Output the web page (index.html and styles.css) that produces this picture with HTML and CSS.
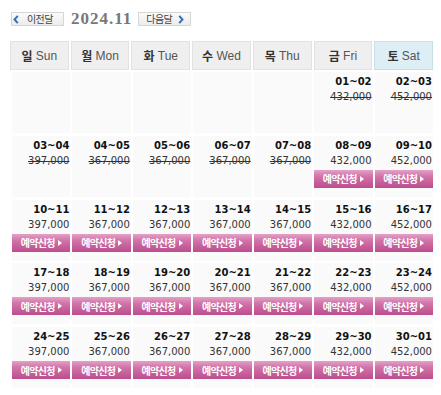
FILE: index.html
```html
<!DOCTYPE html>
<html lang="ko">
<head>
<meta charset="utf-8">
<title>2024.11</title>
<link rel="stylesheet" href="styles.css">
</head>
<body>
<div class="cal">
  <div class="topbar">
    <a class="navbtn prev" href="#"><svg class="chev" width="6" height="9" viewBox="0 0 6 9"><polyline points="4.8,0.8 1.5,4.5 4.8,8.2" fill="none" stroke="#3a70b6" stroke-width="2"/></svg><span class="navtxt">이전달</span></a>
    <span class="title">2024.11</span>
    <a class="navbtn next" href="#"><span class="navtxt">다음달</span><svg class="chev" width="6" height="9" viewBox="0 0 6 9"><polyline points="1.2,0.8 4.5,4.5 1.2,8.2" fill="none" stroke="#3a70b6" stroke-width="2"/></svg></a>
  </div>
  <div class="head">
    <div class="hcell"><b>일</b> Sun</div>
    <div class="hcell"><b>월</b> Mon</div>
    <div class="hcell"><b>화</b> Tue</div>
    <div class="hcell"><b>수</b> Wed</div>
    <div class="hcell"><b>목</b> Thu</div>
    <div class="hcell"><b>금</b> Fri</div>
    <div class="hcell sat"><b>토</b> Sat</div>
  </div>
  <div class="body">
    <div class="cell"></div>
    <div class="cell"></div>
    <div class="cell"></div>
    <div class="cell"></div>
    <div class="cell"></div>
    <div class="cell"><div class="date">01~02</div><div class="price past">432,000</div></div>
    <div class="cell"><div class="date">02~03</div><div class="price past">452,000</div></div>

    <div class="cell"><div class="date">03~04</div><div class="price past">397,000</div></div>
    <div class="cell"><div class="date">04~05</div><div class="price past">367,000</div></div>
    <div class="cell"><div class="date">05~06</div><div class="price past">367,000</div></div>
    <div class="cell"><div class="date">06~07</div><div class="price past">367,000</div></div>
    <div class="cell"><div class="date">07~08</div><div class="price past">367,000</div></div>
    <div class="cell"><div class="date">08~09</div><div class="price">432,000</div><a class="book" href="#">예약신청<i class="tri"></i></a></div>
    <div class="cell"><div class="date">09~10</div><div class="price">452,000</div><a class="book" href="#">예약신청<i class="tri"></i></a></div>

    <div class="cell"><div class="date">10~11</div><div class="price">397,000</div><a class="book" href="#">예약신청<i class="tri"></i></a></div>
    <div class="cell"><div class="date">11~12</div><div class="price">367,000</div><a class="book" href="#">예약신청<i class="tri"></i></a></div>
    <div class="cell"><div class="date">12~13</div><div class="price">367,000</div><a class="book" href="#">예약신청<i class="tri"></i></a></div>
    <div class="cell"><div class="date">13~14</div><div class="price">367,000</div><a class="book" href="#">예약신청<i class="tri"></i></a></div>
    <div class="cell"><div class="date">14~15</div><div class="price">367,000</div><a class="book" href="#">예약신청<i class="tri"></i></a></div>
    <div class="cell"><div class="date">15~16</div><div class="price">432,000</div><a class="book" href="#">예약신청<i class="tri"></i></a></div>
    <div class="cell"><div class="date">16~17</div><div class="price">452,000</div><a class="book" href="#">예약신청<i class="tri"></i></a></div>

    <div class="cell"><div class="date">17~18</div><div class="price">397,000</div><a class="book" href="#">예약신청<i class="tri"></i></a></div>
    <div class="cell"><div class="date">18~19</div><div class="price">367,000</div><a class="book" href="#">예약신청<i class="tri"></i></a></div>
    <div class="cell"><div class="date">19~20</div><div class="price">367,000</div><a class="book" href="#">예약신청<i class="tri"></i></a></div>
    <div class="cell"><div class="date">20~21</div><div class="price">367,000</div><a class="book" href="#">예약신청<i class="tri"></i></a></div>
    <div class="cell"><div class="date">21~22</div><div class="price">367,000</div><a class="book" href="#">예약신청<i class="tri"></i></a></div>
    <div class="cell"><div class="date">22~23</div><div class="price">432,000</div><a class="book" href="#">예약신청<i class="tri"></i></a></div>
    <div class="cell"><div class="date">23~24</div><div class="price">452,000</div><a class="book" href="#">예약신청<i class="tri"></i></a></div>

    <div class="cell"><div class="date">24~25</div><div class="price">397,000</div><a class="book" href="#">예약신청<i class="tri"></i></a></div>
    <div class="cell"><div class="date">25~26</div><div class="price">367,000</div><a class="book" href="#">예약신청<i class="tri"></i></a></div>
    <div class="cell"><div class="date">26~27</div><div class="price">367,000</div><a class="book" href="#">예약신청<i class="tri"></i></a></div>
    <div class="cell"><div class="date">27~28</div><div class="price">367,000</div><a class="book" href="#">예약신청<i class="tri"></i></a></div>
    <div class="cell"><div class="date">28~29</div><div class="price">367,000</div><a class="book" href="#">예약신청<i class="tri"></i></a></div>
    <div class="cell"><div class="date">29~30</div><div class="price">432,000</div><a class="book" href="#">예약신청<i class="tri"></i></a></div>
    <div class="cell"><div class="date">30~01</div><div class="price">452,000</div><a class="book" href="#">예약신청<i class="tri"></i></a></div>
  </div>
</div>
</body>
</html>
```

FILE: styles.css
```css
html, body {
  margin: 0;
  padding: 0;
  background: #fff;
}
.cal {
  padding: 12px 0 0 10px;
  width: 423px;
  font-family: "DejaVu Sans", Verdana, sans-serif;
}
.topbar {
  display: flex;
  align-items: center;
  height: 14px;
  padding-left: 1px;
}
.navbtn {
  display: flex;
  align-items: center;
  box-sizing: border-box;
  height: 14px;
  width: 53px;
  border: 1px solid #d6d6d6;
  background: linear-gradient(#fbfbfb, #ececec);
  text-decoration: none;
  color: #333;
}
.prev { padding-left: 1px; }
.next { padding-left: 7px; }
.chev {
  display: block;
  flex: none;
}
.prev .chev { margin-right: 8px; }
.next .chev { margin-left: 6px; }
.navtxt {
  font-family: "Noto Sans CJK KR", sans-serif;
  font-size: 10px;
  letter-spacing: -0.6px;
  line-height: 12px;
  color: #444;
}
.title {
  font-family: "Liberation Serif", "Times New Roman", serif;
  font-weight: bold;
  font-size: 17px;
  letter-spacing: 1px;
  color: #777;
  margin: 0 6px 0 7px;
  line-height: 14px;
}
.head {
  margin-top: 15px;
  display: grid;
  grid-template-columns: repeat(7, 1fr);
  column-gap: 2px;
}
.hcell {
  box-sizing: border-box;
  height: 29px;
  border: 1px solid #e2e2e2;
  background: #efefef;
  display: flex;
  align-items: center;
  justify-content: center;
  font-family: "Liberation Sans", Arial, sans-serif;
  font-size: 12px;
  color: #555;
  white-space: pre;
}
.hcell b {
  font-family: "Noto Sans CJK KR", sans-serif;
  font-size: 12px;
  font-weight: bold;
  color: #333;
}
.hcell.sat {
  background: #ddeef5;
  border-color: #c8dee8;
}
.body {
  margin: 2px 0 0 2px;
  display: grid;
  grid-template-columns: repeat(7, 1fr);
  grid-auto-rows: 61px;
  column-gap: 2px;
  row-gap: 2.75px;
}
.cell {
  background: #fafafa;
  padding-top: 3px;
  display: flex;
  flex-direction: column;
  align-items: stretch;
}
.date {
  font-weight: bold;
  font-size: 10px;
  line-height: 14px;
  text-align: right;
  color: #111;
  padding-right: 1px;
}
.price {
  font-size: 10px;
  line-height: 16px;
  text-align: right;
  color: #333;
  padding-right: 1px;
}
.price.past {
  text-decoration: line-through;
}
.book {
  margin-top: 1px;
  height: 18px;
  display: flex;
  align-items: center;
  justify-content: center;
  background: linear-gradient(#e3a1c7 0%, #d274aa 35%, #c65e9a 70%, #bb4e8d 100%);
  color: #fff;
  text-decoration: none;
  font-family: "Noto Sans CJK KR", sans-serif;
  font-size: 10px;
  font-weight: bold;
  letter-spacing: -0.7px;
}
.tri {
  display: inline-block;
  width: 0;
  height: 0;
  border-left: 4px solid #fff;
  border-top: 3.5px solid transparent;
  border-bottom: 3.5px solid transparent;
  margin-left: 3px;
}
```
